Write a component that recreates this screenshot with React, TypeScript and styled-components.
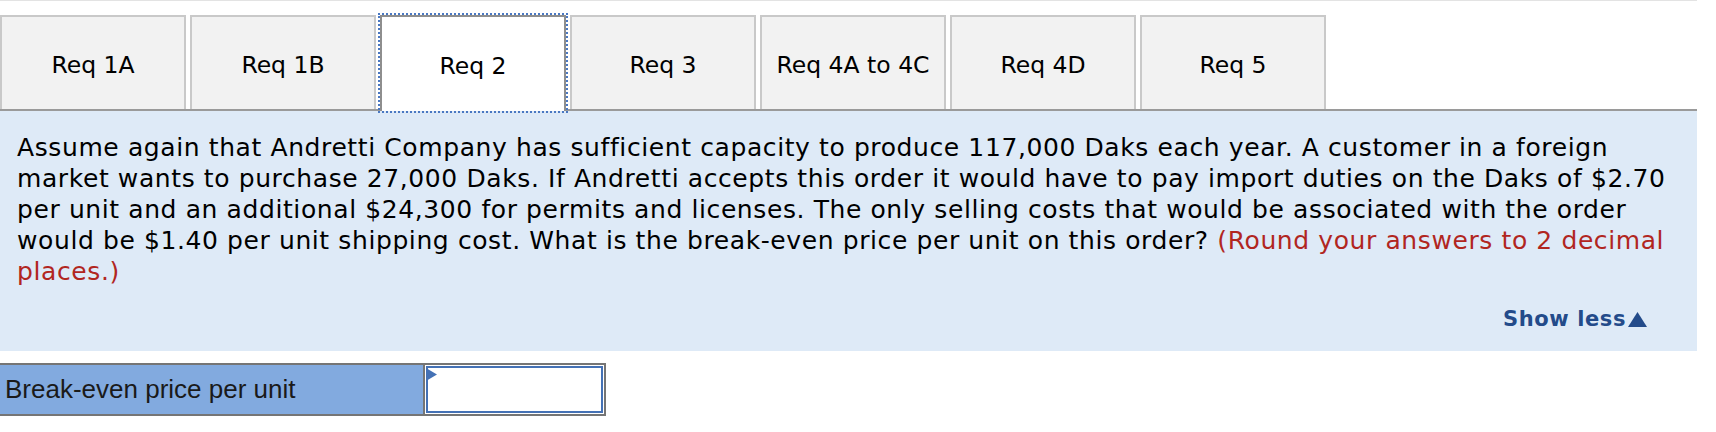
import styled, { createGlobalStyle } from "styled-components";

const GlobalStyle = createGlobalStyle`
  body {
    margin: 0;
    background: #ffffff;
  }
`;

const Page = styled.div`
  width: 1697px;
  border-top: 1px solid #e3e3e3;
  padding-top: 14px;
`;

const TabBar = styled.div`
  display: flex;
  gap: 4px;
  border-bottom: 2px solid #9a9a9a;
`;

const Tab = styled.button<{ $active?: boolean }>`
  position: relative;
  box-sizing: border-box;
  width: 186px;
  height: ${(p) => (p.$active ? "96px" : "94px")};
  margin-bottom: ${(p) => (p.$active ? "-2px" : "0")};
  padding: 4px 0 0;
  border: 2px solid ${(p) => (p.$active ? "#8e8e8e" : "#c9c9c9")};
  border-bottom: none;
  background: ${(p) => (p.$active ? "#ffffff" : "#f2f2f2")};
  outline: ${(p) => (p.$active ? "2px dotted #4a78c2" : "none")};
  z-index: ${(p) => (p.$active ? 1 : 0)};
  font-family: "DejaVu Sans", Verdana, sans-serif;
  font-size: 23.5px;
  color: #000;
  cursor: pointer;
`;

const Panel = styled.div`
  background: #deeaf7;
  padding: 21px 0 19px 17px;
`;

// Verdana is wider than DejaVu, hence the letter-spacing
const Question = styled.p`
  margin: 0;
  padding-right: 20px;
  font-family: "DejaVu Sans", Verdana, sans-serif;
  font-size: 25px;
  line-height: 31px;
  letter-spacing: 0.6px;
  color: #000;
`;

const Hint = styled.span`
  color: #b1261f;
`;

const ShowRow = styled.div`
  display: flex;
  justify-content: flex-end;
  margin-top: 19px;
  padding-right: 50px;
`;

const ShowLess = styled.a`
  display: flex;
  align-items: center;
  gap: 2px;
  font-family: "DejaVu Sans", Verdana, sans-serif;
  font-weight: bold;
  font-size: 21px;
  line-height: 26px;
  letter-spacing: 0.6px;
  color: #234b8a;
  cursor: pointer;
`;

const AnswerRow = styled.div`
  display: flex;
  width: 606px;
  margin-top: 12px;
  border: 2px solid #757575;
  border-left: none;
  box-sizing: border-box;
`;

const LabelCell = styled.div`
  display: flex;
  align-items: center;
  width: 425px;
  height: 49px;
  padding-left: 5px;
  box-sizing: border-box;
  background: #82aadf;
  border-right: 2px solid #757575;
  font-family: "Liberation Sans", Arial, sans-serif;
  font-size: 26px;
  color: #1a1a1a;
`;

const InputCell = styled.div`
  position: relative;
  flex: 1;
  padding: 1px;
`;

const AnswerInput = styled.input`
  display: block;
  box-sizing: border-box;
  width: 100%;
  height: 47px;
  margin: 0;
  border: 2px solid #4471b5;
  background: #fff;
  outline: none;
`;

const Marker = styled.svg`
  position: absolute;
  left: 1px;
  top: 3px;
`;

const tabs = ["Req 1A", "Req 1B", "Req 2", "Req 3", "Req 4A to 4C", "Req 4D", "Req 5"];

function App() {
  return (
    <Page>
      <GlobalStyle />
      <TabBar>
        {tabs.map((t) => (
          <Tab key={t} $active={t === "Req 2"}>
            {t}
          </Tab>
        ))}
      </TabBar>
      <Panel>
        <Question>
          Assume again that Andretti Company has sufficient capacity to produce 117,000 Daks each year. A customer in a
          foreign market wants to purchase 27,000 Daks. If Andretti accepts this order it would have to pay import duties
          on the Daks of $2.70 per unit and an additional $24,300 for permits and licenses. The only selling costs that
          would be associated with the order would be $1.40 per unit shipping cost. What is the break-even price per
          unit on this order? <Hint>(Round your answers to 2 decimal places.)</Hint>
        </Question>
        <ShowRow>
          <ShowLess>
            Show less
            <svg width="19" height="15" viewBox="0 0 19 15">
              <polygon points="9.5,0 19,15 0,15" fill="#234b8a" />
            </svg>
          </ShowLess>
        </ShowRow>
      </Panel>
      <AnswerRow>
        <LabelCell>Break-even price per unit</LabelCell>
        <InputCell>
          <AnswerInput type="text" />
          <Marker width="11" height="13" viewBox="0 0 11 13">
            <polygon points="0,0 11,6.5 0,13" fill="#4471b5" />
          </Marker>
        </InputCell>
      </AnswerRow>
    </Page>
  );
}

export default App;
